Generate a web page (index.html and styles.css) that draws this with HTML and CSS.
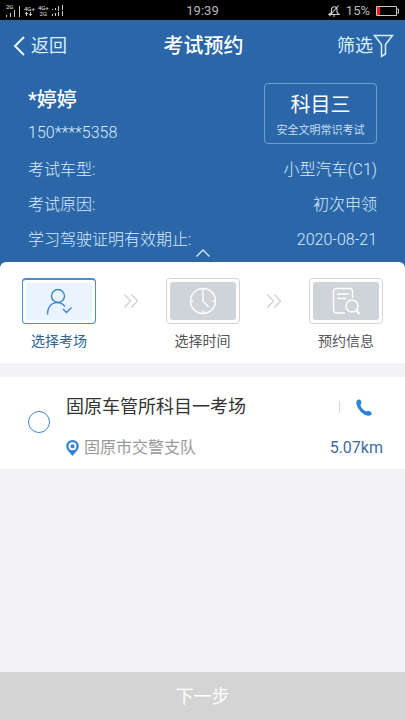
FILE: index.html
```html
<!DOCTYPE html>
<html lang="zh-CN">
<head>
<meta charset="utf-8">
<meta name="viewport" content="width=device-width, initial-scale=1">
<title>考试预约</title>
<link rel="stylesheet" href="styles.css">
</head>
<body>
<div class="status">
  <div class="signals">
    <span class="signal first">
      <span class="net">2G</span>
      <svg width="15" height="12" viewBox="0 0 15 12" fill="#c8c8c8"><path d="M0 10h1v2H0zM4 8h1v4H4zM8 5h1v7H8zM13 1h1v11h-1z"/></svg>
    </span>
    <span class="signal stack">
      <span class="net">4G+</span>
      <svg width="8" height="4" viewBox="0 0 8 4" fill="none" stroke="#c8c8c8"><path d="M1.500 4V0M0 1.500h3M5.500 0v4M4 2.500h3"/></svg>
    </span>
    <span class="signal stack">
      <span class="net">4G+</span>
      <span class="net">2G</span>
    </span>
    <svg class="bars" width="11" height="12" viewBox="0 0 11 12" fill="#c8c8c8"><path d="M0 4h1v1H0zM0 9h1v2H0zM3 3h1v2H3zM3 8h1v3H3zM6 1h1v5H6zM6 7h1v4H6zM10 0h1v5h-1zM10 6h1v5h-1z"/></svg>
  </div>
  <time class="clock">19:39</time>
  <div class="power">
    <svg width="12" height="12" viewBox="0 0 12 12" fill="none" stroke="#d0d0d0" stroke-width="1.100"><path d="M1 9.500h10L9 7.500V4.500C9 .8 3.500.8 3.500 4.500v3zM5 11h2M1.500 11 10.500.5"/></svg>
    <span>15%</span>
    <svg width="23" height="10" viewBox="0 0 23 10"><path d="M.5.500h20v9H.5zM21 3h1.500v4H21" fill="none" stroke="#c8c8c8"/><path d="M1 1h3v8H1z" fill="#f02020"/></svg>
  </div>
</div>

<header class="top">
  <nav class="nav">
    <a class="back" href="#">
      <svg width="12" height="20" viewBox="0 0 12 20" fill="none" stroke="#e8f6ff" stroke-width="2"><path d="M11 1 2 10l9 9"/></svg>
      <span>返回</span>
    </a>
    <h1>考试预约</h1>
    <button class="filter" type="button">
      <span>筛选</span>
      <svg width="21" height="24" viewBox="0 0 21 24" fill="none" stroke="#d9efff" stroke-width="1.500"><path d="M1.500 1.500h18L12.500 10.500V20L8.500 22.500V10.500z"/></svg>
    </button>
  </nav>
  <section class="info">
    <div class="person">
      <div>
        <h2>*婷婷</h2>
        <p class="phone">150****5358</p>
      </div>
      <div class="subject">
        <strong>科目三</strong>
        <span>安全文明常识考试</span>
      </div>
    </div>
    <dl>
      <div class="row"><dt>考试车型:</dt><dd>小型汽车(C1)</dd></div>
      <div class="row"><dt>考试原因:</dt><dd>初次申领</dd></div>
      <div class="row"><dt>学习驾驶证明有效期止:</dt><dd>2020-08-21</dd></div>
    </dl>
    <button class="fold" type="button" aria-label="收起">
      <svg width="14" height="8" viewBox="0 0 14 8" fill="none" stroke="#d9efff" stroke-width="1.300"><path d="M.5 7.500 7 1l6.500 6.500"/></svg>
    </button>
  </section>
</header>

<main>
  <ol class="steps">
    <li class="step active">
      <div class="frame"><div class="tile">
        <svg width="26" height="28" viewBox="0 0 26 28" fill="none" stroke="#3a86cf" stroke-width="1.400"><circle cx="12" cy="8" r="6.500"/><path d="M1.500 26.500C1.500 12 15 12.500 19 18.500M17 21l3.500 3.500 5-5"/></svg>
      </div></div>
      <span>选择考场</span>
    </li>
    <li class="arrow" aria-hidden="true"><svg width="14" height="14" viewBox="0 0 14 14" fill="none" stroke="#cdd3d7" stroke-width="1.300"><path d="m.5.500 6 6.500-6 6.500M7.500.500l6 6.500-6 6.500"/></svg></li>
    <li class="step">
      <div class="frame"><div class="tile">
        <svg width="28" height="28" viewBox="0 0 28 28" fill="none" stroke="#fff" stroke-width="1.400"><circle cx="14" cy="14" r="12.500"/><path d="M14 5v9l5.500 6M14 1.500v3M14 23.500v3M1.500 14h3M23.500 14h3"/></svg>
      </div></div>
      <span>选择时间</span>
    </li>
    <li class="arrow" aria-hidden="true"><svg width="14" height="14" viewBox="0 0 14 14" fill="none" stroke="#cdd3d7" stroke-width="1.300"><path d="m.5.500 6 6.500-6 6.500M7.500.500l6 6.500-6 6.500"/></svg></li>
    <li class="step">
      <div class="frame"><div class="tile">
        <svg width="28" height="28" viewBox="0 0 28 28" fill="none" stroke="#fff" stroke-width="1.400"><path d="M13 26H4.500a3 3 0 0 1-3-3V4.500a3 3 0 0 1 3-3h13a3 3 0 0 1 3 3V11M5 7h12M5 11.500h9"/><circle cx="20" cy="19" r="6"/><path d="m24.500 23.500 3 3.500" stroke-width="2"/></svg>
      </div></div>
      <span>预约信息</span>
    </li>
  </ol>

  <section class="site">
    <input type="radio" name="site" id="site-1">
    <label for="site-1" class="site-name">固原车管所科目一考场</label>
    <a class="call" href="#" aria-label="拨打电话">
      <svg width="17" height="17" viewBox="0 0 17 17" fill="#2f83d6"><path d="M1.200 1.200C2.500-.2 4.500.2 5.200 2.300c.6 1.800.3 2.500-.9 3.600.8 2.800 3.300 5.500 6.300 6.700 1.300-1 2-1.100 3.500-.1 1.800 1.200 2.300 2.300 1.200 3.300-2.500 2.300-7.300.2-10.500-3.100C1.300 9.300-1 3.800 1.200 1.200z"/></svg>
    </a>
    <p class="place">
      <svg width="13" height="16" viewBox="0 0 13 16"><path fill="#2f83d6" fill-rule="evenodd" d="M6.500 0A6.300 6.300 0 0 0 .2 6.300C.2 10 4 12.500 6.500 16 9 12.500 12.800 10 12.800 6.300A6.300 6.300 0 0 0 6.500 0zm0 2.300a4 4 0 1 1 0 8 4 4 0 0 1 0-8z"/><circle cx="6.500" cy="6.300" r="2" fill="#2f83d6"/></svg>
      <span>固原市交警支队</span>
    </p>
    <span class="distance">5.07km</span>
  </section>
</main>

<button class="next" type="button">下一步</button>
</body>
</html>
```

FILE: styles.css
```css
* { box-sizing: border-box; margin: 0; padding: 0; }

body {
  min-height: 100vh;
  display: flex;
  flex-direction: column;
  background: #f2f2f7;
  font-family: Roboto, "Noto Sans CJK SC", sans-serif;
  font-size: 16px;
  line-height: 24px;
  color: #333;
}

button {
  border: 0;
  background: none;
  font: inherit;
  color: inherit;
}

a { color: inherit; text-decoration: none; }
svg { display: block; flex: none; }
ol { list-style: none; }

.status {
  height: 20px;
  padding: 2px 6px 0;
  display: grid;
  grid-template-columns: 1fr auto 1fr;
  align-items: center;
  background: #000;
  color: #b8b8b8;
  font-size: 13px;
  line-height: 18px;
}
.signals { display: flex; align-items: center; gap: 3px; }
.signal { display: flex; }
.signal .net { font-size: 6px; line-height: 6px; color: #e0e0e0; }
.first { position: relative; }
.first .net { position: absolute; top: -1px; left: 0; }
.stack { flex-direction: column; align-items: center; }
.power {
  display: flex;
  justify-content: flex-end;
  align-items: center;
  gap: 6px;
}

.top {
  padding-bottom: 11px;
  background: #2b67a8;
  color: #c6def5;
}
.nav {
  height: 50px;
  padding: 2px 11px 0 13px;
  display: grid;
  grid-template-columns: 1fr auto 1fr;
  align-items: center;
  font-size: 18px;
  color: #d9efff;
}
.nav h1 {
  font-size: 20px;
  font-weight: 500;
  color: #fff;
}
.back { display: flex; align-items: center; gap: 6px; }
.filter {
  display: flex;
  align-items: center;
  justify-self: end;
}

.info { position: relative; padding: 13px 28px 0; }
.person {
  display: flex;
  justify-content: space-between;
  align-items: flex-start;
}
.person h2 {
  margin-top: 3px;
  font-size: 20px;
  line-height: 28px;
  font-weight: 500;
  color: #fff;
}
.phone { margin-top: 7px; }
.subject {
  width: 113px;
  height: 61px;
  padding-top: 9px;
  display: flex;
  flex-direction: column;
  align-items: center;
  gap: 4px;
  border: 1px solid #6d9fd2;
  border-radius: 4px;
}
.subject strong { font-size: 20px; font-weight: 400; color: #fff; }
.subject span { font-size: 11px; line-height: 20px; }
dl { margin-top: 7px; font-weight: 300; color: #d9ebfc; }
.row {
  display: flex;
  justify-content: space-between;
  line-height: 35px;
}
.phone { font-weight: 300; color: #d9ebfc; }
.fold {
  position: absolute;
  left: 50%;
  bottom: 0;
  transform: translateX(-50%);
}

.steps {
  position: relative;
  margin-top: -6px;
  padding: 16px 22px 10px;
  display: flex;
  justify-content: space-between;
  border-radius: 6px 6px 0 0;
  background: #fff;
  font-size: 14px;
  color: #555;
}
.step { text-align: center; }
.frame {
  width: 74px;
  height: 46px;
  margin-bottom: 5px;
  padding: 3px;
  border: 1px solid #d0d4d7;
  border-radius: 4px;
}
.tile {
  height: 100%;
  display: flex;
  align-items: center;
  justify-content: center;
  border-radius: 3px;
  background: #cfd4d9;
}
.active { color: #2c6496; }
.active .frame { border-color: #4a8fd6; border-top-width: 2px; }
.active .tile { background: #e9f4fe; }
.arrow { padding-top: 16px; }

.site {
  margin-top: 14px;
  padding: 16px 22px 9px 28px;
  display: grid;
  grid-template-columns: 38px 1fr auto;
  grid-template-rows: 28px 24px;
  row-gap: 15px;
  align-items: center;
  background: #fff;
}
.site input {
  grid-row: 1 / 3;
  align-self: start;
  width: 22px;
  height: 22px;
  margin-top: 18px;
  appearance: none;
  border: 1px solid #3a86cf;
  border-radius: 50%;
}
.site-name { font-size: 18px; }
.call {
  justify-self: end;
  width: 44px;
  height: 12px;
  padding-left: 16px;
  display: flex;
  align-items: center;
  border-left: 1px solid #d4d4d4;
}
.place {
  display: flex;
  align-items: center;
  gap: 5px;
  color: #999;
}
.distance { color: #3f6c9b; }

.next {
  height: 48px;
  margin-top: auto;
  padding-top: 2px;
  background: #d4d4d4;
  color: #fff;
  font-size: 18px;
}
```
